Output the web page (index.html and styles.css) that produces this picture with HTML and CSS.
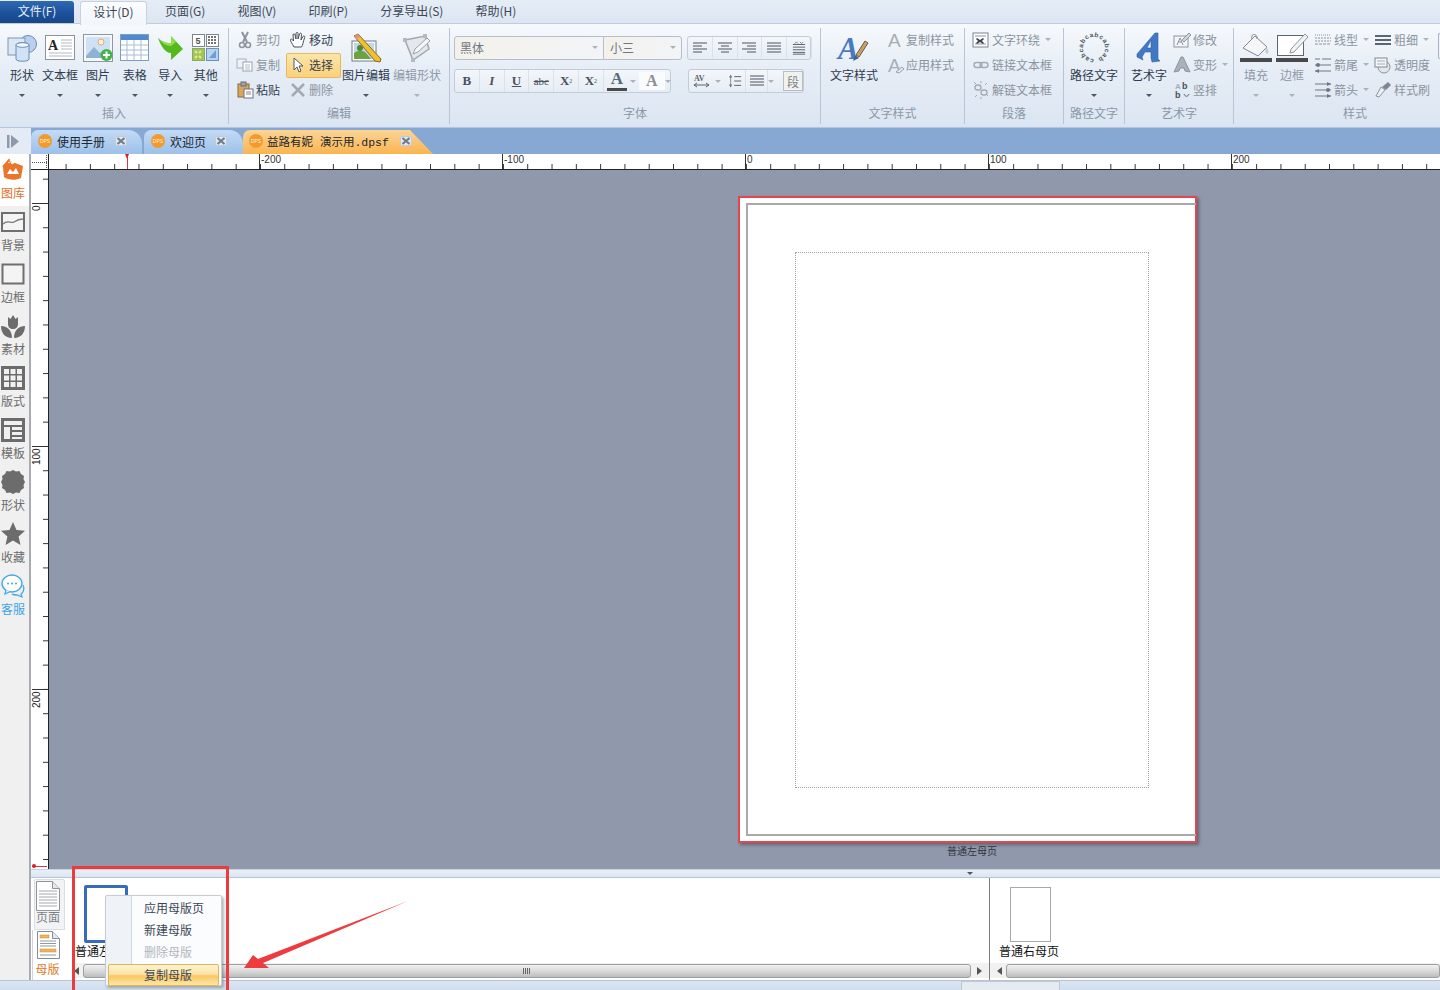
FILE: index.html
```html
<!DOCTYPE html>
<html lang="zh-CN">
<head>
<meta charset="utf-8">
<title>设计</title>
<link rel="stylesheet" href="styles.css">
</head>
<body>
<svg class="defs" aria-hidden="true">
  <symbol id="close" viewBox="0 0 12 12"><rect x="0.5" y="1.5" width="11" height="9" rx="1.5" fill="#e3e8ef" stroke="#c2cad4"/><path d="M2.500 3l7 6M9.500 3l-7 6" stroke="#6f7c8c" stroke-width="2.200"/></symbol>
  <symbol id="doc" viewBox="0 0 26 30"><path d="M1.500.5h16l7 7v22h-23z" fill="#fff" stroke="#8f949b"/><path d="M17.500.5v7h7" fill="#e6e6e6" stroke="#8f949b"/><path d="M4 10h18M4 13h18M4 16h18M4 19h18M4 22h18M4 25h18" stroke="#a5a8ad"/></symbol>
  <symbol id="a-left" viewBox="0 0 16 14"><path d="M1 2h14M1 5h9M1 8h14M1 11h9" stroke="#4d5560" stroke-width="1.200"/></symbol>
  <symbol id="a-center" viewBox="0 0 16 14"><path d="M1 2h14M4 5h8M1 8h14M4 11h8" stroke="#4d5560" stroke-width="1.200"/></symbol>
  <symbol id="a-right" viewBox="0 0 16 14"><path d="M1 2h14M6 5h9M1 8h14M6 11h9" stroke="#4d5560" stroke-width="1.200"/></symbol>
  <symbol id="a-just" viewBox="0 0 16 14"><path d="M1 2h14M1 5h14M1 8h14M1 11h14" stroke="#4d5560" stroke-width="1.200"/></symbol>
</svg>
<div class="app">
  <header class="menubar">
    <span class="menu-file">文件(F)</span>
    <span class="menu-item menu-active">设计(D)</span>
    <span class="menu-item m-page">页面(G)</span>
    <span class="menu-item m-view">视图(V)</span>
    <span class="menu-item m-print">印刷(P)</span>
    <span class="menu-item m-share">分享导出(S)</span>
    <span class="menu-item m-help">帮助(H)</span>
  </header>

  <section class="ribbon">
    <div class="group g-insert">
      <div class="group-body pad-insert">
        <div class="big w38"><div class="big-icon">
          <svg width="30" height="30" viewBox="0 0 30 30"><circle cx="21" cy="11" r="8.500" fill="#b9d1ee" stroke="#6b8db8"/><rect x="1" y="5" width="17" height="17" fill="#dbe7f5" stroke="#7d95b3"/><path d="M9 12c0-3 13-3 13 0v14c0 3-13 3-13 0z" fill="#cfe2f6" stroke="#6b8db8"/><ellipse cx="15.500" cy="12" rx="6.500" ry="2.300" fill="#f2f8ff" stroke="#6b8db8"/></svg>
        </div><span class="big-label">形状</span><i class="caret"></i></div>
        <div class="big w38"><div class="big-icon">
          <svg width="30" height="26" viewBox="0 0 30 26"><rect x=".5" y=".5" width="29" height="24" fill="#fff" stroke="#8b939e"/><text x="3" y="15" class="svg-a">A</text><path d="M16 5h11M16 8h11M16 11h11M16 14h11M4 18h23M4 21h23" stroke="#b2b8c0"/></svg>
        </div><span class="big-label">文本框</span><i class="caret"></i></div>
        <div class="big w38"><div class="big-icon">
          <svg width="30" height="28" viewBox="0 0 30 28"><rect x=".5" y=".5" width="29" height="27" fill="#f5f7fa" stroke="#8e98a4"/><rect x="3" y="3" width="24" height="21" fill="#cfe1f5"/><circle cx="18" cy="8" r="3" fill="#fff3d8" stroke="#e8a869"/><path d="M3 22l8-9 6 6 3-2 7 6v1H3z" fill="#8fb1d6"/><circle cx="23.500" cy="21" r="6" fill="#46b14a"/><path d="M23.500 17.500v7M20 21h7" stroke="#fff" stroke-width="2"/></svg>
        </div><span class="big-label">图片</span><i class="caret"></i></div>
        <div class="big w35"><div class="big-icon">
          <svg width="29" height="27" viewBox="0 0 29 27"><rect x=".5" y=".5" width="28" height="26" fill="#fff" stroke="#7f9dc2"/><rect x="1" y="1" width="27" height="5" fill="#4e8ad0"/><path d="M1 11h27M1 16h27M1 21h27M7 6v20M14 6v20M21 6v20" stroke="#a9bdd6"/></svg>
        </div><span class="big-label">表格</span><i class="caret"></i></div>
        <div class="big w35"><div class="big-icon">
          <svg width="27" height="26" viewBox="0 0 27 26"><path d="M1 3c6 5 9 5 13 5V1l12 13-12 11v-7C8 18 4 11 1 3z" fill="#56b81f"/><path d="M1 3c6 5 9 5 13 5V1l5 6-5 4c-6 0-10-4-13-8z" fill="#92dc4e"/></svg>
        </div><span class="big-label">导入</span><i class="caret"></i></div>
        <div class="big w35"><div class="big-icon">
          <svg width="27" height="27" viewBox="0 0 27 27"><rect x=".5" y=".5" width="12" height="12" fill="#fff" stroke="#7d8792"/><text x="3.500" y="10" class="svg-5">5</text><rect x="14.500" y=".5" width="12" height="12" fill="#fff" stroke="#7d8792"/><path d="M16 3h9M16 6h9M16 9h9" stroke="#444" stroke-dasharray="2 1" stroke-width="1.500"/><rect x=".5" y="14.500" width="12" height="12" fill="#9cc75c" stroke="#8aa968"/><path d="M3 17l2 2M9 17l-2 2M3 24l2-2M9 24l-2-2" stroke="#f3e97b" stroke-width="2" fill="none"/><rect x="14.500" y="14.500" width="12" height="12" fill="#b7d3ef" stroke="#6f8fb6"/><path d="M17 24l7-8v8z" fill="#6d9ed6"/></svg>
        </div><span class="big-label">其他</span><i class="caret"></i></div>
      </div>
      <div class="group-label">插入</div>
    </div>

    <div class="group g-edit">
      <div class="group-body">
        <div class="col col-cut">
          <div class="small off"><svg class="ic" viewBox="0 0 18 18"><path d="M6 1l5 10M12 1L7 11" stroke="#8d949e" stroke-width="2"/><circle cx="6" cy="14" r="2.500" fill="none" stroke="#8d949e" stroke-width="1.500"/><circle cx="12" cy="14" r="2.500" fill="none" stroke="#8d949e" stroke-width="1.500"/></svg><span>剪切</span></div>
          <div class="small off"><svg class="ic" viewBox="0 0 18 18"><rect x="1" y="3" width="9" height="9" fill="#eef1f5" stroke="#aab1ba"/><rect x="7" y="6" width="9" height="9" fill="#fff" stroke="#9aa2ac"/><path d="M9 9h5M9 11h5M9 13h5" stroke="#b3b9c1"/></svg><span>复制</span></div>
          <div class="small"><svg class="ic" viewBox="0 0 18 18"><rect x="2" y="3" width="11" height="13" fill="#d9a65a" stroke="#8a6a3a"/><rect x="5" y="1" width="5" height="4" fill="#9ba3ad" stroke="#66707c"/><rect x="8" y="8" width="9" height="9" fill="#fff" stroke="#6d7682"/><path d="M10 11h5M10 13h5" stroke="#888"/></svg><span>粘贴</span></div>
        </div>
        <div class="col col-move">
          <div class="small"><svg class="ic" viewBox="0 0 18 18"><path d="M5 16C3 12 1 10 1.500 8.500c.6-1 2-.2 3 1.500L4 4c0-1.500 1.800-1.500 2 0l1 4V2.500c0-1.500 2-1.500 2 0V8l1.500-5c.4-1.400 2.200-1 2 .5L12 9l2-3.500c.7-1 2.200-.4 1.700.9C14 11 14 14 12.500 16z" fill="#fff" stroke="#47505b"/></svg><span>移动</span></div>
          <div class="small hot"><svg class="ic" viewBox="0 0 18 18"><path d="M5 2v12l3-3 2 5 2-1-2-5h4z" fill="#fff" stroke="#4a5a70"/></svg><span>选择</span></div>
          <div class="small off"><svg class="ic" viewBox="0 0 18 18"><path d="M3 3l12 12M15 3L3 15" stroke="#a3a9b1" stroke-width="2.500"/></svg><span>删除</span></div>
        </div>
        <div class="big w50"><div class="big-icon">
          <svg width="32" height="30" viewBox="0 0 32 30"><rect x="2" y="8" width="24" height="20" fill="#fff" stroke="#6f7986"/><rect x="4" y="10" width="20" height="16" fill="#bcd7ee"/><path d="M4 26v-6c4-3 9-3 12 0l5 6z" fill="#6aa33f"/><circle cx="10" cy="15" r="3" fill="#4f8a2f"/><path d="M4 3l4-2 23 25-1 3-5-1z" fill="#f0c030" stroke="#8a6a1f"/><path d="M4 3l4-2 2 3-4 2z" fill="#e48a96"/></svg>
        </div><span class="big-label">图片编辑</span><i class="caret"></i></div>
        <div class="big w52 dis"><div class="big-icon">
          <svg width="30" height="30" viewBox="0 0 30 30"><path d="M3 7L23 3l4 13-16 11z" fill="#e4e7eb" stroke="#a2a8b0" stroke-width="1.500"/><rect x="1" y="5" width="4" height="4" fill="#b5bac1"/><rect x="21" y="1" width="4" height="4" fill="#b5bac1"/><rect x="9" y="25" width="4" height="4" fill="#b5bac1"/><path d="M11 21l2-5L25 5l3 3-12 11z" fill="#f5f6f8" stroke="#9ba1a9"/></svg>
        </div><span class="big-label">编辑形状</span><i class="caret lite"></i></div>
      </div>
      <div class="group-label">编辑</div>
    </div>

    <div class="group g-font">
      <div class="font-body">
        <div class="font-row">
          <div class="combo combo-name"><span>黑体</span><i class="caret lite"></i></div>
          <div class="combo combo-size"><span>小三</span><i class="caret lite"></i></div>
          <div class="tools tools-align">
            <span class="tool"><svg class="t16" viewBox="0 0 16 14"><use href="#a-left"/></svg></span>
            <span class="tool"><svg class="t16" viewBox="0 0 16 14"><use href="#a-center"/></svg></span>
            <span class="tool"><svg class="t16" viewBox="0 0 16 14"><use href="#a-right"/></svg></span>
            <span class="tool"><svg class="t16" viewBox="0 0 16 14"><use href="#a-just"/></svg></span>
            <span class="tool"><svg class="t16" viewBox="0 0 16 16"><path d="M1 4h14M1 7h14M1 10h14M1 13h14M1 15h14" stroke="#4d5560"/><path d="M3 3l2-2 2 2M9 1l2 2 2-2" stroke="#6b7683" fill="none"/></svg></span>
          </div>
        </div>
        <div class="font-row">
          <div class="tools tools-style">
            <span class="tool serif b">B</span>
            <span class="tool serif it">I</span>
            <span class="tool serif b ul">U</span>
            <span class="tool serif strike">abc</span>
            <span class="tool serif b">X<sub>2</sub></span>
            <span class="tool serif b">X<sup>2</sup></span>
            <span class="tool tool-w serif fc">A<i class="bar"></i></span><i class="caret lite"></i>
            <span class="tool tool-w serif hl">A</span><i class="caret lite"></i>
          </div>
          <div class="tools tools-para">
            <span class="tool tool-av"><svg class="t18" viewBox="0 0 18 16"><text x="1" y="8" class="svg-av">AV</text><path d="M1 12h15M1 12l3-2M1 12l3 2M16 12l-3-2M16 12l-3 2" stroke="#5a6572" fill="none"/></svg></span><i class="caret lite"></i>
            <span class="tool tool-n"><svg class="t16" viewBox="0 0 16 16"><path d="M3 1v14" stroke="#7b8794"/><path d="M1 4l2-3 2 3zM1 12l2 3 2-3z" fill="#6b7683"/><path d="M7 3h8M7 8h8M7 13h8" stroke="#4d5560"/></svg></span>
            <span class="tool tool-n"><svg class="t16" viewBox="0 0 16 14"><path d="M1 2h14M1 5h14M1 8h14M1 11h14" stroke="#4d5560" stroke-width="1.200"/></svg></span><i class="caret lite"></i>
            <span class="tool seg">段</span>
          </div>
        </div>
      </div>
      <div class="group-label">字体</div>
    </div>

    <div class="group g-tstyle">
      <div class="group-body">
        <div class="big w66"><div class="big-icon">
          <svg width="32" height="32" viewBox="0 0 32 32"><text x="0" y="27" class="svg-bigA">A</text><path d="M18 23l9-14 3 2-9 14z" fill="#c9a06a" stroke="#6d5a40"/><path d="M17 23l4 3-6 3z" fill="#3f5f8f"/></svg>
        </div><span class="big-label">文字样式</span></div>
        <div class="col">
          <div class="small off gap1"><svg class="ic" viewBox="0 0 18 18"><text x="1" y="16" class="svg-grayA">A</text></svg><span>复制样式</span></div>
          <div class="small off gap1"><svg class="ic" viewBox="0 0 18 18"><text x="1" y="16" class="svg-grayA">A</text><path d="M9 16l6-5 2 2-5 4z" fill="#e6e9ed" stroke="#9aa2ac"/></svg><span>应用样式</span></div>
        </div>
      </div>
      <div class="group-label">文字样式</div>
    </div>

    <div class="group g-para">
      <div class="group-body">
        <div class="col col-para">
          <div class="small off"><svg class="ic" viewBox="0 0 18 18"><rect x="1" y="2" width="15" height="14" fill="#fff" stroke="#7b8490"/><path d="M3 5h11M3 13h11" stroke="#8c949e"/><path d="M5 7l3 2 3-2 1 1-2 2 2 2-1 1-3-2-3 2-1-1 2-2-2-2z" fill="#3d4550"/></svg><span>文字环绕</span><i class="caret lite"></i></div>
          <div class="small off"><svg class="ic" viewBox="0 0 18 18"><rect x="2" y="6.500" width="8" height="5" rx="2.500" fill="none" stroke="#a3aab3" stroke-width="1.400"/><rect x="8" y="6.500" width="8" height="5" rx="2.500" fill="none" stroke="#a3aab3" stroke-width="1.400"/></svg><span>链接文本框</span></div>
          <div class="small off"><svg class="ic" viewBox="0 0 18 18"><rect x="3" y="4" width="6" height="5" rx="2.500" fill="none" stroke="#a3aab3" stroke-width="1.300"/><rect x="9" y="9" width="6" height="5" rx="2.500" fill="none" stroke="#a3aab3" stroke-width="1.300"/><path d="M2 1l2 2M9 0v2M15 2l-2 2M3 16l2-2M9 16v2M16 15l-2-2" stroke="#a3aab3"/></svg><span>解链文本框</span></div>
        </div>
      </div>
      <div class="group-label">段落</div>
    </div>

    <div class="group g-path">
      <div class="group-body">
        <div class="big w61"><div class="big-icon">
          <svg width="30" height="30" viewBox="0 0 30 30"><path id="ring" d="M15 26a11 11 0 1 1 0-22a11 11 0 1 1 0 22" fill="none"/><text class="svg-ring"><textPath href="#ring">cabcabcabcabcab</textPath></text></svg>
        </div><span class="big-label">路径文字</span><i class="caret"></i></div>
      </div>
      <div class="group-label">路径文字</div>
    </div>

    <div class="group g-art">
      <div class="group-body">
        <div class="big w48"><div class="big-icon">
          <svg width="26" height="32" viewBox="0 0 26 32"><path d="M1 22L19 1h3v26l2 2-8 1-1-4v-6H9l-3 5 1 3-6-3zM11 16h4V8z" fill="#3f79c6" stroke="#2f5f9e" stroke-width=".6"/></svg>
        </div><span class="big-label">艺术字</span><i class="caret"></i></div>
        <div class="col col-art">
          <div class="small off"><svg class="ic" viewBox="0 0 18 18"><rect x="1" y="5" width="14" height="11" fill="#f3f5f8" stroke="#8d959f"/><path d="M4 14l3-7 3 7M5 11h4" stroke="#8d959f" fill="none"/><path d="M9 9l7-7 2 2-7 7z" fill="#cfd5dc" stroke="#8d959f"/></svg><span>修改</span></div>
          <div class="small off"><svg class="ic" viewBox="0 0 18 18"><path d="M1 16L8 1h2l7 15-5-1-1-3H7l-1 3z" fill="#a9b1bb" stroke="#8d959f"/></svg><span>变形</span><i class="caret lite"></i></div>
          <div class="small off"><svg class="ic ic-vert" viewBox="0 0 18 18"><text x="2" y="8" class="svg-vl">A</text><text x="9" y="8" class="svg-vd">b</text><text x="2" y="17" class="svg-vd">b</text><path d="M11 13c1 3 4 3 5 0" fill="none" stroke="#5d6672"/></svg><span>竖排</span></div>
        </div>
      </div>
      <div class="group-label">艺术字</div>
    </div>

    <div class="group g-style">
      <div class="group-body pad-style">
        <div class="big w36 dis"><div class="big-icon">
          <svg class="fillicon" width="32" height="30" viewBox="0 0 32 30"><path d="M3 15L15 3l12 11-9 9z" fill="#f5f6f8" stroke="#7f8791"/><path d="M12 6c-2-6 6-6 5 0" fill="none" stroke="#7f8791"/><path d="M26 14c3 3 3 6 1 7-2-1-2-4-1-7z" fill="#c5cad1"/><rect y="25" width="32" height="4" fill="#4a4a4a"/></svg>
        </div><span class="big-label">填充</span><i class="caret lite"></i></div>
        <div class="big w36 dis"><div class="big-icon">
          <svg class="fillicon" width="32" height="30" viewBox="0 0 32 30"><rect x="1.500" y="2.500" width="26" height="20" fill="#fff" stroke="#5d6570"/><path d="M14 20l1-4L29 1l3 3-14 15z" fill="#f0f2f5" stroke="#8f969f"/><rect y="25" width="32" height="4" fill="#4a4a4a"/></svg>
        </div><span class="big-label">边框</span><i class="caret lite"></i></div>
        <div class="col col-line">
          <div class="small off"><svg class="ic" viewBox="0 0 18 18"><path d="M1 4h16" stroke="#8b929b" stroke-dasharray="1 1"/><path d="M1 7h16M1 10h16" stroke="#8b929b" stroke-dasharray="2 1"/><path d="M1 13h16" stroke="#8b929b" stroke-dasharray="3 1"/></svg><span>线型</span><i class="caret lite"></i></div>
          <div class="small off"><svg class="ic" viewBox="0 0 18 18"><path d="M1 3h5M8 3h9M8 9h9M8 15h9M1 9h7M1 15h7" stroke="#6e7681"/><circle cx="4" cy="9" r="2" fill="#6e7681"/><path d="M1 15l4-2v4z" fill="#6e7681"/></svg><span>箭尾</span><i class="caret lite"></i></div>
          <div class="small off"><svg class="ic" viewBox="0 0 18 18"><path d="M1 3h16M1 9h16M1 15h16" stroke="#6e7681"/><path d="M17 3l-4-2v4zM17 15l-4-2v4z" fill="#6e7681"/><circle cx="14" cy="9" r="2" fill="#6e7681"/></svg><span>箭头</span><i class="caret lite"></i></div>
        </div>
        <div class="col col-weight">
          <div class="small off"><svg class="ic" viewBox="0 0 18 18"><path d="M1 5h16M1 9h16M1 13h16" stroke="#5d6570" stroke-width="1.800"/></svg><span>粗细</span><i class="caret lite"></i></div>
          <div class="small off"><svg class="ic" viewBox="0 0 18 18"><circle cx="10" cy="11" r="6" fill="#e3e6ea" stroke="#8d959f"/><rect x="1" y="2" width="12" height="9" fill="#f5f6f8" stroke="#7f8791"/><path d="M3 5h8M3 8h8" stroke="#a5abb3"/></svg><span>透明度</span></div>
          <div class="small off"><svg class="ic" viewBox="0 0 18 18"><path d="M2 15l5-9 4 3-6 7z" fill="#eceef1" stroke="#8d959f"/><path d="M8 6l6-5 3 3-5 5z" fill="#7e8791"/></svg><span>样式刷</span></div>
        </div>
      </div>
      <div class="group-label label-style">样式</div>
    </div>
    <div class="ribbon-stub"></div>
  </section>

  <nav class="tabbar">
    <div class="tab-toggle"><svg width="12" height="13" viewBox="0 0 12 13"><rect x="0" y="0" width="2.500" height="13" fill="#8f9aa8"/><path d="M4 0l8 6.500L4 13z" fill="#8f9aa8"/></svg></div>
    <div class="tab tab-1"><span class="badge">DPS</span><span class="tab-text">使用手册</span><svg class="close" viewBox="0 0 12 12"><use href="#close"/></svg></div>
    <div class="tab tab-2"><span class="badge">DPS</span><span class="tab-text">欢迎页</span><svg class="close" viewBox="0 0 12 12"><use href="#close"/></svg></div>
    <div class="tab tab-3"><span class="badge">DPS</span><span class="tab-text tab-mono">益路有妮 演示用.dpsf</span><svg class="close" viewBox="0 0 12 12"><use href="#close"/></svg></div>
  </nav>

  <div class="workspace">
    <aside class="sidebar">
      <div class="side-item side-lib">
        <svg width="24" height="22" viewBox="0 0 24 22"><path d="M2 8l4-4 8 0 8 3-2 12c-6 3-13 2-17-1z" fill="#e9762b"/><path d="M6 15l3-5 3 3 3-4 3 6z" fill="#fff"/><path d="M2 8L8 1l3 4" fill="none" stroke="#e9762b" stroke-width="2"/><path d="M9 1l2 4 3-2" fill="none" stroke="#fff" stroke-width="1"/></svg>
        <span>图库</span>
      </div>
      <div class="side-item">
        <svg width="24" height="20" viewBox="0 0 24 20"><rect x="1" y="1" width="22" height="18" fill="#f4f4f4" stroke="#6f6f6f" stroke-width="2"/><path d="M2 12c5-5 8 0 11-2s5-3 9-3" fill="none" stroke="#7a7a7a" stroke-width="1.300"/></svg>
        <span>背景</span>
      </div>
      <div class="side-item">
        <svg width="24" height="22" viewBox="0 0 24 22"><rect x="1.500" y="1.500" width="21" height="19" fill="#f4f4f4" stroke="#6f6f6f" stroke-width="2"/></svg>
        <span>边框</span>
      </div>
      <div class="side-item">
        <svg width="24" height="24" viewBox="0 0 24 24"><path d="M7 3l2.500 2L12 1l2.500 4L17 3v7c0 3-2 5-5 5s-5-2-5-5z" fill="#6c6c6c"/><path d="M0 12c6 0 11 4 11 12C4 24 0 19 0 12zM24 12c-6 0-11 4-11 12 7 0 11-5 11-12z" fill="#6c6c6c"/></svg>
        <span>素材</span>
      </div>
      <div class="side-item">
        <svg width="24" height="24" viewBox="0 0 24 24"><rect width="24" height="24" fill="#6c6c6c"/><path d="M3 3h5v5H3zM9.500 3h5v5h-5zM16 3h5v5h-5zM3 9.500h5v5H3zM9.500 9.500h5v5h-5zM16 9.500h5v5h-5zM3 16h5v5H3zM9.500 16h5v5h-5zM16 16h5v5h-5z" fill="#f0f0f0"/></svg>
        <span>版式</span>
      </div>
      <div class="side-item">
        <svg width="24" height="24" viewBox="0 0 24 24"><rect width="24" height="24" fill="#6c6c6c"/><path d="M3 3h18v4H3zM3 9h6v12H3zM11 9h10v3H11zM11 14h10v3H11zM11 19h10v2H11z" fill="#f0f0f0"/></svg>
        <span>模板</span>
      </div>
      <div class="side-item">
        <svg width="24" height="24" viewBox="0 0 24 24"><path d="M12 0l3 1.500 3.500-.5 1.500 3 3 2-.5 3L24 12l-1.500 3 .5 3-3 2-1.500 3-3.500-.5L12 24l-3-1.500-3.500.5L4 20l-3-2 .5-3L0 12l1.500-3L1 6l3-2 1.500-3L9 1.500z" fill="#6c6c6c"/></svg>
        <span>形状</span>
      </div>
      <div class="side-item">
        <svg width="24" height="24" viewBox="0 0 24 24"><path d="M12 0l3.500 8 8.500.8-6.400 5.600L19.500 23 12 18.500 4.500 23l1.900-8.600L0 8.800 8.500 8z" fill="#6c6c6c"/></svg>
        <span>收藏</span>
      </div>
      <div class="side-item side-help">
        <svg width="24" height="24" viewBox="0 0 24 24"><ellipse cx="11" cy="9.500" rx="10" ry="8.500" fill="#fff" stroke="#42a8e8" stroke-width="1.400"/><path d="M5 16l-1 4 5-2.500" fill="#fff" stroke="#42a8e8" stroke-width="1.300"/><path d="M22 11c2 4 0 8-2 9l1 3-5-2c-2 0-4 0-5-1" fill="none" stroke="#42a8e8" stroke-width="1.300"/><circle cx="7" cy="9.500" r="1" fill="#42a8e8"/><circle cx="11" cy="9.500" r="1" fill="#42a8e8"/><circle cx="15" cy="9.500" r="1" fill="#42a8e8"/></svg>
        <span>客服</span>
      </div>
    </aside>

    <main class="stage">
      <div class="ruler-top">
        <div class="ruler-corner"><svg width="18" height="16" viewBox="0 0 18 16"><path d="M1 8.500h15M15.500 1v14" stroke="#555" stroke-dasharray="1 1" fill="none"/></svg></div>
        <div class="hruler">
          <span class="hmark">-200</span><span class="hmark">-100</span><span class="hmark">0</span><span class="hmark">100</span><span class="hmark">200</span>
          <i class="hmarker"></i>
        </div>
      </div>
      <div class="stage-main">
        <div class="vruler">
          <span class="vmark"><b>0</b></span><span class="vmark"><b>100</b></span><span class="vmark"><b>200</b></span>
          <i class="vmarker"></i>
        </div>
        <div class="canvas">
          <div class="page">
            <div class="page-inner"><div class="page-dots"></div></div>
          </div>
          <div class="page-name">普通左母页</div>
        </div>
      </div>
      <div class="splitter"><i class="caret"></i></div>
      <div class="bottom">
        <div class="vtabs">
          <div class="vtab vtab-page"><svg width="26" height="30" viewBox="0 0 26 30"><use href="#doc"/></svg><span>页面</span></div>
          <div class="vtab vtab-master"><svg width="24" height="28" viewBox="0 0 24 28"><path d="M1.500.5h15l7 7v20h-22z" fill="#fff" stroke="#7e8da0"/><path d="M16.500.5v7h7" fill="#e6e6e6" stroke="#7e8da0"/><rect x="4" y="4" width="9" height="3" fill="#f2b35c" stroke="#c98a30" stroke-width=".5"/><path d="M4 10h16M4 12.500h16M4 15h16" stroke="#8f98a5"/><rect x="4" y="18" width="16" height="3" fill="#f2b35c" stroke="#c98a30" stroke-width=".5"/><path d="M4 24h16" stroke="#8f98a5"/></svg><span>母版</span></div>
        </div>
        <div class="pane pane-left">
          <div class="pane-content">
            <div class="thumb thumb-sel"></div>
            <div class="thumb-name name-left">普通左母页</div>
          </div>
          <div class="scroll scroll-left">
            <i class="arr arr-l"></i>
            <div class="thumb-bar"><span class="grip"></span></div>
            <i class="arr arr-r"></i>
          </div>
        </div>
        <div class="pane pane-right">
          <div class="pane-content">
            <div class="thumb thumb-right"></div>
            <div class="thumb-name name-right">普通右母页</div>
          </div>
          <div class="scroll scroll-right">
            <i class="arr arr-l"></i>
            <div class="thumb-bar"></div>
          </div>
        </div>
      </div>
    </main>
  </div>
  <footer class="statusbar"><span class="status-box"></span></footer>

  <div class="ctx">
    <div class="ctx-item">应用母版页</div>
    <div class="ctx-item">新建母版</div>
    <div class="ctx-item ctx-off">删除母版</div>
    <div class="ctx-item ctx-hot">复制母版</div>
  </div>
  <div class="mark-box"></div>
  <svg class="mark-arrow" width="180" height="80" viewBox="0 0 180 80"><path d="M1 68l9-13 5 4L165 1 20 63l6 5z" fill="#ee3b3f"/></svg>
</div>
</body>
</html>
```

FILE: styles.css
```css
* { box-sizing: border-box; }
html, body { margin: 0; padding: 0; }
body { font-family: "Noto Sans CJK SC", "Noto Sans", sans-serif; font-size: 12px; color: #333; background: #fff; }
i { font-style: normal; }
svg { overflow: visible; }
.defs { display: block; width: 0; height: 0; }

.app { position: relative; width: 1440px; height: 990px; overflow: hidden; display: flex; flex-direction: column; }

/* menu */
.menubar { height: 24px; flex: none; display: flex; align-items: stretch; background: linear-gradient(#e5edf6, #dce6f2); border-bottom: 1px solid #c3ccd8; }
.menu-file { width: 74px; margin-top: 1px; background: linear-gradient(#2f69b3, #1c5199 55%, #17478a); color: #e8f0fa; text-align: center; line-height: 20px; border-radius: 0 3px 0 0; }
.menu-item { line-height: 21px; color: #3b4756; white-space: nowrap; }
.menu-active { width: 67px; margin-left: 6px; margin-top: 1px; height: 24px; background: linear-gradient(#fafcfe, #f2f6fb); border: 1px solid #c8d2de; border-bottom: 0; border-radius: 3px 3px 0 0; text-align: center; position: relative; z-index: 1; line-height: 19px; }
.m-page { margin-left: 18px; }
.m-view { margin-left: 32px; }
.m-print { margin-left: 32px; }
.m-share { margin-left: 32px; }
.m-help { margin-left: 32px; }

/* ribbon */
.ribbon { height: 104px; flex: none; display: flex; padding-top: 4px; background: linear-gradient(#f6f9fc, #e6edf6 45%, #dbe5f1); border-bottom: 1px solid #b4c6dd; }
.group { height: 96px; display: flex; flex-direction: column; border-right: 1px solid #b9c5d4; flex: none; }
.group-body { height: 78px; display: flex; }
.group-label { height: 16px; margin-top: -1px; line-height: 16px; text-align: center; color: #8b98a9; }
.label-style { padding-left: 38px; }
.g-insert { width: 229px; }
.pad-insert { padding-left: 3px; }
.g-edit { width: 221px; }
.g-font { width: 371px; }
.g-tstyle { width: 144px; }
.g-para { width: 99px; }
.g-path { width: 61px; }
.g-art { width: 109px; }
.g-style { width: 204px; border-right: 0; }
.pad-style { padding-left: 4px; }
.ribbon-stub { width: 6px; height: 26px; margin-top: 5px; border: 1px solid #aab6c5; border-right: 0; border-radius: 4px 0 0 4px; background: #edf2f8; }

.big { width: 36px; flex: none; display: flex; flex-direction: column; align-items: center; padding-top: 3px; }
.big-icon { height: 33px; display: flex; align-items: center; justify-content: center; }
.big-label { height: 22px; line-height: 22px; white-space: nowrap; color: #2f3c4d; }
.big .caret { margin-top: 8px; }
.w38 { width: 38px; }
.w35 { width: 35.500px; }
.w36 { width: 36px; }
.w50 { width: 50px; }
.w52 { width: 52px; }
.w48 { width: 48px; }
.w61 { width: 60px; }
.w66 { width: 66px; }
.dis .big-label { color: #8f9aa8; }

.caret { display: inline-block; width: 0; height: 0; border-left: 3px solid transparent; border-right: 3px solid transparent; border-top: 3px solid #4b5563; }
.caret.lite { border-top-color: #aab2bc; }

.col { display: flex; flex-direction: column; flex: none; margin-top: -1px; }
.small { height: 25px; display: flex; align-items: center; gap: 2px; color: #33404f; white-space: nowrap; }
.small.off { color: #8b94a0; }
.small .caret { margin-left: 3px; }
.gap1 { gap: 1px; }
.ic { width: 18px; height: 18px; flex: none; }
.col-cut { width: 50px; margin-left: 7px; }
.col-move { width: 55px; }
.col-move .small { padding-left: 3px; gap: 2px; }
.col-move .small.hot { margin: 1px 0 -1px; padding: 0 0 2px 2px; background: linear-gradient(#fbe5a8, #fbd27c); border: 1px solid #e8b85a; border-radius: 2px; }
.col-para { margin-left: 7px; }
.col-line { width: 60px; margin-left: 4px; }

.svg-a { font: 700 14px "Liberation Serif", serif; fill: #222; }
.svg-5 { font: 700 9px "Liberation Sans", sans-serif; fill: #555; }
.svg-av { font: 700 8px "Liberation Serif", serif; fill: #5a6572; }
.svg-bigA { font: italic 700 31px "Liberation Serif", serif; fill: #4a79c4; }
.svg-grayA { font: 19px "Liberation Sans", sans-serif; fill: #a6adb6; }
.svg-vl { font: 700 8px "Liberation Sans", sans-serif; fill: #a6adb6; }
.svg-vd { font: 700 9px "Liberation Sans", sans-serif; fill: #4a525c; }
.svg-ring { font: 700 6.500px "Liberation Sans", sans-serif; fill: #4c5561; letter-spacing: .6px; }

/* font group */
.font-body { height: 78px; padding: 8px 0 0 4px; display: flex; flex-direction: column; gap: 9px; }
.font-row { height: 24px; display: flex; }
.combo { height: 24px; display: flex; align-items: center; justify-content: space-between; padding: 0 5px 1px; background: linear-gradient(90deg, #f4f1ea, #f2f4f7); border: 1px solid #b5bfcb; color: #6e7782; }
.combo-name { width: 150px; border-radius: 3px 0 0 3px; }
.combo-size { width: 79px; margin-left: -1px; border-radius: 0 3px 3px 0; padding-left: 6px; }
.tools { height: 24px; display: flex; align-items: center; background: linear-gradient(#f3f6fa, #e6edf5); border: 1px solid #c3ccd8; border-radius: 3px; }
.tools-align { width: 124px; margin-left: 5px; }
.tools-style { width: 217px; }
.tools-para { width: 116px; margin-left: 17px; }
.tool { width: 24.800px; height: 22px; flex: none; display: flex; align-items: center; justify-content: center; border-right: 1px solid #dbe2eb; color: #4a525c; }
.tools .caret { margin: 0 3px 0 0; }
.t16 { width: 16px; height: 14px; }
.t18 { width: 18px; height: 16px; }
.serif { font: 13px "Liberation Serif", serif; }
.serif.b { font-weight: 700; }
.it { font-style: italic; font-weight: 700; }
.ul { text-decoration: underline; }
.strike { text-decoration: line-through; font-size: 11px; }
.serif sub, .serif sup { font-size: 6px; font-weight: 400; }
.tool-w { width: 26px; position: relative; border-right: 0; }
.fc { font-size: 17px; font-weight: 700; align-items: flex-start; line-height: 18px; color: #5d6875; }
.bar { position: absolute; left: 3px; right: 3px; bottom: 1px; height: 3px; background: #4a4a4a; }
.hl { font-size: 16px; font-weight: 700; color: #8a8f96; background: #fafbfc; height: 18px; }
.tool-av { width: 26px; border-right: 0; }
.tool-n { width: 22px; }
.seg { width: 20px; height: 20px; border: 1px solid #b7bec8; background: #f1f2ee; color: #7a828c; font-size: 12px; margin-left: 6px; }

/* tabs */
.tabbar { height: 26px; flex: none; display: flex; align-items: flex-end; background: #87a8d3; }
.tab-toggle { width: 31px; height: 26px; display: flex; align-items: center; padding-left: 7px; background: #e4ebf4; }
.tab { height: 24px; display: flex; align-items: center; color: #20262e; padding: 0 0 2px 7px; border-radius: 7px 14px 0 0; background: linear-gradient(#c3dbf6, #9dc0ea); }
.tab-1 { width: 111px; margin-right: 2px; }
.tab-2 { width: 99px; }
.tab-3 { width: 190px; padding-left: 6px; background: linear-gradient(#fbd596, #fbb44f); clip-path: polygon(0 0, 167px 0, 100% 100%, 0 100%); border-radius: 7px 0 0 0; }
.badge { width: 14px; height: 14px; flex: none; border-radius: 50%; background: #f29a2e; color: #fff3df; font: 5px/14px "Liberation Sans", sans-serif; text-align: center; }
.tab-text { margin-left: 5px; white-space: nowrap; }
.tab-mono { font-family: "Liberation Mono", "Noto Sans CJK SC", monospace; font-size: 11.500px; margin-left: 4px; white-space: pre; }
.close { width: 12px; height: 12px; margin-left: auto; flex: none; }
.tab-1 .close { margin-right: 15px; }
.tab-2 .close { margin-right: 16px; }
.tab-3 .close { margin-right: 21px; }

/* workspace */
.workspace { flex: 1; min-height: 0; display: flex; }
.sidebar { width: 31px; flex: none; background: #f0f0f0; border-right: 2px solid #a8abb0; }
.side-item { height: 52px; display: flex; flex-direction: column; align-items: center; padding: 4px 3px 0 0; color: #6b6b6b; line-height: 16px; font-size: 12px; }
.side-item svg { flex: none; height: 24px; }
.side-item span { margin-top: 3px; }
.side-lib { background: #fff; color: #e2702a; }
.side-help { color: #3ea5e6; }

.stage { flex: 1; min-width: 0; display: flex; flex-direction: column; }
.ruler-top { height: 16px; flex: none; display: flex; }
.ruler-corner { width: 18px; flex: none; background: #fff; border-right: 1px solid #222; border-bottom: 1px solid #222; overflow: hidden; }
.hruler { position: relative; flex: 1; display: flex; padding-left: 210px; background: #fff linear-gradient(90deg, #333 1px, transparent 1px) 16.600px 100% / 24.300px 5px repeat-x; border-bottom: 1px solid #222; overflow: hidden; }
.hmark { width: 243px; flex: none; border-left: 1px solid #333; padding-left: 1px; height: 15px; font: 10px/12px "Liberation Sans", sans-serif; color: #333; }
.hmarker { position: absolute; left: 77px; top: 0; width: 3px; height: 15px; background: linear-gradient(90deg, transparent 1px, #e0353d 1px, #e0353d 2px, transparent 2px); }
.hmarker::before { content: ""; position: absolute; left: -1px; top: 0; border-left: 2.500px solid transparent; border-right: 2.500px solid transparent; border-top: 5px solid #d8232b; }

.stage-main { height: 699px; flex: none; display: flex; }
.vruler { position: relative; width: 18px; flex: none; padding-top: 33px; display: flex; flex-direction: column; background: #fff linear-gradient(#333 1px, transparent 1px) 100% 8.700px / 5px 24.300px repeat-y; border-right: 1px solid #222; overflow: hidden; }
.vmark { height: 243px; flex: none; border-top: 1px solid #333; margin-left: 1px; }
.vmark b { display: block; writing-mode: vertical-rl; transform: rotate(180deg); font: 10px/10px "Liberation Sans", sans-serif; color: #222; width: 10px; height: 18px; text-align: right; margin-top: 1px; }
.vmarker { position: absolute; left: 1px; right: 1px; top: 696px; height: 1px; background: #e0353d; }
.vmarker::before { content: ""; position: absolute; left: 0; top: -2px; width: 4px; height: 4px; border-radius: 50%; background: #d8232b; }

.canvas { flex: 1; background: #9098ac; padding: 26px 0 0 689px; overflow: hidden; }
.page { width: 459px; height: 647px; background: #fff; border: 2px solid #e2474f; box-shadow: 2px 2px 3px rgba(60,60,70,.55); padding: 5px 0 0 6px; }
.page-inner { width: 450px; height: 633px; border: 1px solid #a9a9a9; border-width: 2px 0 2px 2px; padding: 47px 0 0 47px; }
.page-dots { width: 354px; height: 536px; border: 1px dotted #a2a2a2; }
.page-name { width: 448px; margin: 1px 0 0 10px; height: 14px; line-height: 14px; font-size: 10px; text-align: center; color: #2e3340; }

.splitter { height: 8px; flex: none; padding-left: 936px; display: flex; align-items: center; background: linear-gradient(#e9eff7, #dbe6f3); border-top: 1px solid #c8d2de; }
.bottom { flex: 1; min-height: 0; display: flex; background: #fff; border-top: 1px solid #b9c5d4; }
.vtabs { width: 34px; flex: none; display: flex; flex-direction: column; background: #fff; }
.vtab { display: flex; flex-direction: column; align-items: center; line-height: 14px; }
.vtab-page { height: 51px; margin: 1px 0 0 3px; padding: 1px 3px 0 0; background: #f2f3f5; border: 1px solid #d9dde2; border-radius: 2px 2px 0 0; color: #7a7f86; }
.vtab-page span { margin-top: -1px; }
.vtab-master { flex: 1; margin-left: 1px; padding: 1px 3px 0 0; background: #fff; border-left: 1px solid #d0d4da; color: #dd7a26; }
.vtab-master span { margin-top: 3px; }

.pane { display: flex; flex-direction: column; min-width: 0; }
.pane-left { width: 925px; flex: none; border-right: 1px solid #7d7f84; }
.pane-right { flex: 1; }
.pane-content { height: 85px; flex: none; position: relative; }
.thumb { background: #fff; }
.thumb-sel { width: 44px; height: 58px; margin: 7px 0 0 19px; border: 3px solid #386cba; border-radius: 2px; }
.thumb-right { width: 41px; height: 55px; margin: 9px 0 0 20px; border: 1px solid #a8a8a8; }
.thumb-name { line-height: 16px; font-size: 12px; color: #111; white-space: nowrap; }
.name-left { margin: 0 0 0 10px; }
.name-right { margin: 1px 0 0 9px; }

.scroll { height: 15px; flex: none; display: flex; align-items: center; background: #f1f1f1; }
.scroll-left { margin-left: 8px; }
.arr { width: 0; height: 0; flex: none; border-top: 4px solid transparent; border-bottom: 4px solid transparent; }
.arr-l { border-right: 5px solid #555; margin: 0 4px 0 1px; }
.arr-r { border-left: 5px solid #555; margin: 0 7px 0 6px; }
.thumb-bar { flex: 1; height: 14px; display: flex; align-items: center; justify-content: center; border: 1px solid #9c9fa4; border-radius: 3px; background: linear-gradient(#f2f2f2, #d4d4d4 60%, #bcbcbc); }
.scroll-right { padding-left: 6px; }
.grip { width: 8px; height: 6px; background: repeating-linear-gradient(90deg, #666 0 1px, transparent 1px 2px); }

.statusbar { height: 10px; flex: none; padding-left: 961px; background: linear-gradient(#dbe6f3, #cfdded); border-top: 1px solid #b9c5d4; }
.status-box { display: block; width: 99px; height: 9px; background: #e6ebf2; border: 1px solid #bfc8d4; border-bottom: 0; }

/* overlays */
.ctx { position: absolute; left: 105px; top: 895px; width: 117px; height: 91px; padding: 2px 2px 0; background: linear-gradient(90deg, #eff2f6 25px, #cfd6df 25px, #cfd6df 26px, #fbfcfd 26px); border: 1px solid #c8ccd2; border-radius: 2px; box-shadow: 2px 2px 3px rgba(90,90,90,.45); z-index: 2; }
.ctx-item { height: 22px; padding-left: 36px; line-height: 20px; color: #3a4656; white-space: nowrap; }
.ctx-off { color: #b1b6bd; }
.ctx-item.ctx-hot { height: 22px; padding-left: 35px; background: linear-gradient(#fff3d0, #fde4a8 45%, #fbc762 55%, #fde6a8); border: 1px solid #e2b655; border-radius: 2px; line-height: 19px; }
.mark-box { position: absolute; left: 72px; top: 866px; width: 157px; height: 124px; border: 3px solid #ea3b3f; border-bottom: 0; z-index: 3; }
.mark-arrow { position: absolute; left: 243px; top: 900px; z-index: 3; }
```
